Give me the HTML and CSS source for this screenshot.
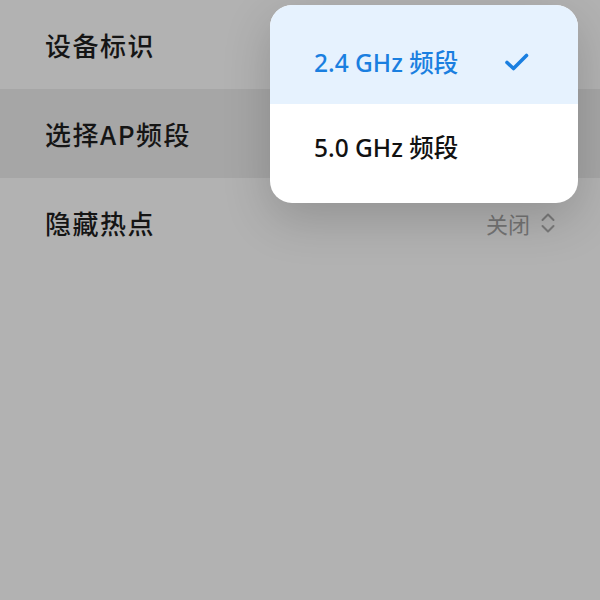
FILE: index.html
```html
<!DOCTYPE html>
<html lang="zh-CN">
<head>
<meta charset="utf-8">
<link rel="stylesheet" href="styles.css">
</head>
<body>
<div class="screen">
  <div class="list">
    <div class="row"><span class="label">设备标识</span></div>
    <div class="row active"><span class="label">选择AP频段</span></div>
    <div class="row">
      <span class="label">隐藏热点</span>
      <span class="value">关闭
        <svg class="updown" width="16" height="22" viewBox="0 0 16 22"><path d="M2.5 8 L8 2.5 L13.5 8 M2.5 14 L8 19.5 L13.5 14" fill="none" stroke="#7a7a7a" stroke-width="2" stroke-linecap="round" stroke-linejoin="round"/></svg>
      </span>
    </div>
  </div>
  <div class="menu">
    <div class="item selected"><span>2.4 GHz 频段</span>
      <svg class="check" width="26" height="20" viewBox="0 0 26 20"><path d="M3 10.5 L9.5 16.5 L22.5 3.5" fill="none" stroke="#1a7fe0" stroke-width="3.6" stroke-linecap="round" stroke-linejoin="round"/></svg>
    </div>
    <div class="item last"><span>5.0 GHz 频段</span></div>
  </div>
</div>
</body>
</html>
```
FILE: styles.css
```css
html, body {
  margin: 0;
  padding: 0;
}
body {
  width: 600px;
  height: 600px;
  overflow: hidden;
  background: #b2b2b2;
  font-family: "Noto Sans CJK SC", "Noto Sans", sans-serif;
}
.screen {
  position: relative;
  width: 600px;
  height: 600px;
  background: #b2b2b2;
}
.list {
  display: flex;
  flex-direction: column;
}
.row {
  height: 89px;
  display: flex;
  align-items: center;
  justify-content: space-between;
  padding: 0 44px 0 45px;
  box-sizing: border-box;
}
.row.active {
  background: #a6a6a6;
}
.label {
  font-size: 26px;
  font-weight: 500;
  color: #151515;
  letter-spacing: 1.5px;
}
.value {
  display: flex;
  align-items: center;
  gap: 10px;
  font-size: 22px;
  color: #747474;
}
.updown {
  display: block;
}
.menu {
  position: absolute;
  left: 270px;
  top: 5px;
  width: 308px;
  height: 198px;
  border-radius: 22px;
  overflow: hidden;
  background: #ffffff;
  box-shadow: 0 16px 48px rgba(0, 0, 0, 0.18);
  display: flex;
  flex-direction: column;
}
.item {
  height: 99px;
  box-sizing: border-box;
  display: flex;
  align-items: center;
  justify-content: space-between;
  padding: 14px 48px 0 44px;
  font-family: "Noto Sans", "Noto Sans CJK SC", sans-serif;
  font-size: 24.5px;
  font-weight: 500;
  color: #111111;
}
.item.last {
  padding-top: 0;
  padding-bottom: 14px;
}
.item.selected {
  background: #e6f2fe;
  color: #1a7fe0;
}
.check {
  display: block;
}
```
